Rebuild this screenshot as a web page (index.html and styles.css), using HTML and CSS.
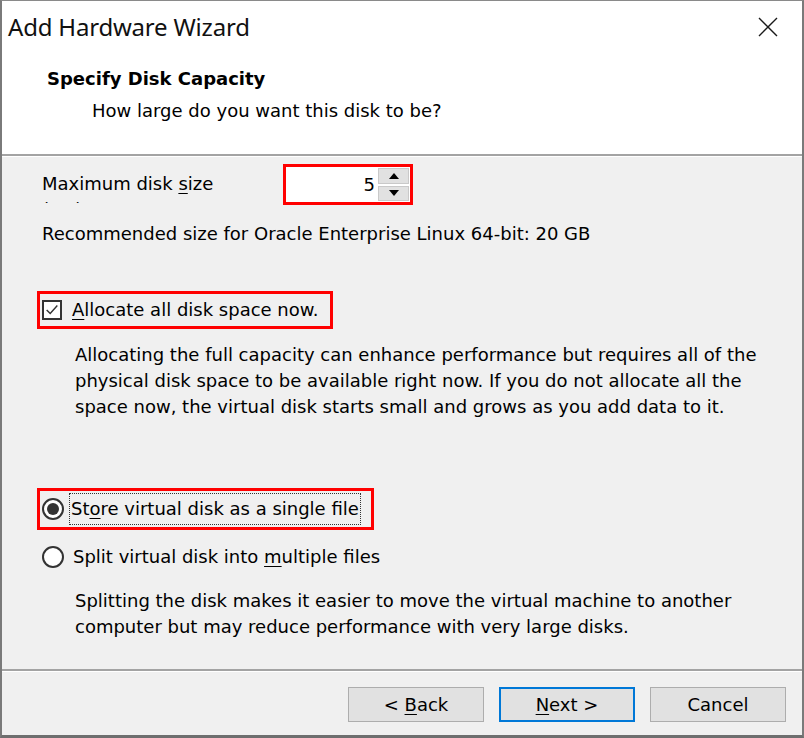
FILE: index.html
```html
<!DOCTYPE html>
<html>
<head>
<meta charset="utf-8">
<title>Add Hardware Wizard</title>
<link rel="stylesheet" href="styles.css">
</head>
<body>
<div class="window">
  <div class="titlebar">
    <span class="title">Add Hardware Wizard</span>
    <svg class="close" width="20" height="20" viewBox="0 0 20 20"><path d="M1 1L19 19M19 1L1 19" stroke="#1a1a1a" stroke-width="1.4" fill="none"/></svg>
  </div>
  <div class="header">
    <div class="h-title">Specify Disk Capacity</div>
    <div class="h-sub">How large do you want this disk to be?</div>
  </div>
  <div class="content">
    <div class="size-row">
      <div class="size-label">Maximum disk <u>s</u>ize (GB):</div>
      <div class="mark spin">
        <div class="spin-field">5</div>
        <div class="spin-btns">
          <div class="spin-btn"><svg width="10" height="6" viewBox="0 0 10 6"><path d="M0 6L5 0L10 6Z" fill="#000"/></svg></div>
          <div class="spin-btn"><svg width="10" height="6" viewBox="0 0 10 6"><path d="M0 0L5 6L10 0Z" fill="#000"/></svg></div>
        </div>
      </div>
    </div>
    <p class="rec">Recommended size for Oracle Enterprise Linux 64-bit: 20 GB</p>
    <div class="mark check-wrap">
      <span class="checkbox"><svg width="18" height="18" viewBox="0 0 18 18"><path d="M3 9L7 13L15 4" stroke="#333" stroke-width="1.6" fill="none"/></svg></span>
      <span class="opt-label"><u>A</u>llocate all disk space now.</span>
    </div>
    <p class="desc desc1">Allocating the full capacity can enhance performance but requires all of the physical disk space to be available right now. If you do not allocate all the space now, the virtual disk starts small and grows as you add data to it.</p>
    <div class="mark radio-wrap">
      <span class="radio checked"></span>
      <span class="opt-label focus">St<u>o</u>re virtual disk as a single file</span>
    </div>
    <div class="radio-row">
      <span class="radio"></span>
      <span class="opt-label">Split virtual disk into <u>m</u>ultiple files</span>
    </div>
    <p class="desc desc2">Splitting the disk makes it easier to move the virtual machine to another computer but may reduce performance with very large disks.</p>
  </div>
  <div class="footer">
    <button class="btn">&lt; <u>B</u>ack</button>
    <button class="btn default"><u>N</u>ext &gt;</button>
    <button class="btn">Cancel</button>
  </div>
</div>
</body>
</html>
```
FILE: styles.css
```css
* { box-sizing: border-box; }
html, body { margin: 0; padding: 0; background: #fff; }
body {
  font-family: "DejaVu Sans", sans-serif;
  font-size: 18px;
  color: #000;
}
u { text-decoration-thickness: 1px; text-underline-offset: 3px; }

.window {
  width: 804px;
  height: 738px;
  border-top: 1px solid #8a8a8a;
  border-left: 2px solid #7a7a7a;
  border-right: 2px solid #7a7a7a;
  border-bottom: 3px solid #6e6e6e;
  display: flex;
  flex-direction: column;
  background: #fff;
}

.titlebar {
  height: 50px;
  display: flex;
  align-items: center;
  justify-content: space-between;
  padding: 0 24px 0 6px;
}
.title {
  font-family: "Noto Sans", "Open Sans", sans-serif;
  font-size: 24px;
  color: #111;
  letter-spacing: -0.2px;
}
.close { display: block; margin-top: 1px; }

.header {
  height: 105px;
  padding: 15px 0 0 45px;
  border-bottom: 2px solid #a3a3a3;
}
.h-title {
  font-weight: bold;
  line-height: 26px;
}
.h-sub {
  line-height: 26px;
  margin-top: 6px;
  padding-left: 45px;
}

.content {
  flex: 1;
  background: #f0f0f0;
  border-top: 1px solid #fff;
  padding: 7px 0 0 40px;
}

.mark { border: 3px solid #ff0000; }

.size-row { display: flex; align-items: flex-start; }
.size-label {
  width: 241px;
  height: 32px;
  margin-top: 7px;
  line-height: 26px;
  overflow: hidden;
  padding-right: 50px;
}
.spin {
  width: 130px;
  height: 41px;
  display: flex;
  background: #fff;
}
.spin-field {
  flex: 1;
  text-align: right;
  line-height: 35px;
  padding-right: 3px;
}
.spin-btns {
  width: 32px;
  display: flex;
  flex-direction: column;
  gap: 2px;
  padding: 1px 1px 1px 0;
  background: #fff;
}
.spin-btn {
  flex: 1;
  background: #e1e1e1;
  border: 1px solid #c9c9c9;
  display: flex;
  align-items: center;
  justify-content: center;
}

.rec {
  margin: 16px 0 0;
  line-height: 26px;
}

.check-wrap {
  margin: 44px 0 0 -5px;
  width: 296px;
  height: 38px;
  display: flex;
  align-items: center;
  padding-left: 2px;
}
.checkbox {
  width: 20px;
  height: 20px;
  border: 2px solid #333;
  background: #fff;
  display: flex;
  align-items: center;
  justify-content: center;
  margin-right: 10px;
}
.opt-label { line-height: 26px; white-space: nowrap; }

.desc {
  margin: 0;
  padding-left: 33px;
  line-height: 26px;
  width: 730px;
}
.desc1 { margin-top: 13px; }

.radio-wrap {
  margin: 68px 0 0 -5px;
  width: 337px;
  height: 42px;
  display: flex;
  align-items: center;
  padding-left: 2px;
}
.radio {
  width: 22px;
  height: 22px;
  border-radius: 50%;
  border: 2px solid #333;
  background: #fff;
  flex: none;
  display: flex;
  align-items: center;
  justify-content: center;
  margin-right: 6px;
}
.radio.checked::after {
  content: "";
  width: 12px;
  height: 12px;
  border-radius: 50%;
  background: #333;
}
.focus {
  outline: 1px dotted #333;
  padding: 2px 1px;
  line-height: 26px;
}
.radio-row {
  margin-top: 14px;
  display: flex;
  align-items: center;
  height: 26px;
}
.radio-row .radio { margin-right: 9px; }
.desc2 { margin-top: 18px; }

.footer {
  height: 66px;
  background: #f0f0f0;
  border-top: 2px solid #a3a3a3;
  display: flex;
  justify-content: flex-end;
  gap: 15px;
  padding: 16px 16px 0 0;
  box-shadow: inset 0 1px 0 #fff;
}
.btn {
  width: 136px;
  height: 35px;
  background: #e1e1e1;
  border: 1px solid #adadad;
  font-family: inherit;
  font-size: 18px;
  color: #000;
  padding: 0;
}
.btn.default { border: 2px solid #0078d7; }
```
